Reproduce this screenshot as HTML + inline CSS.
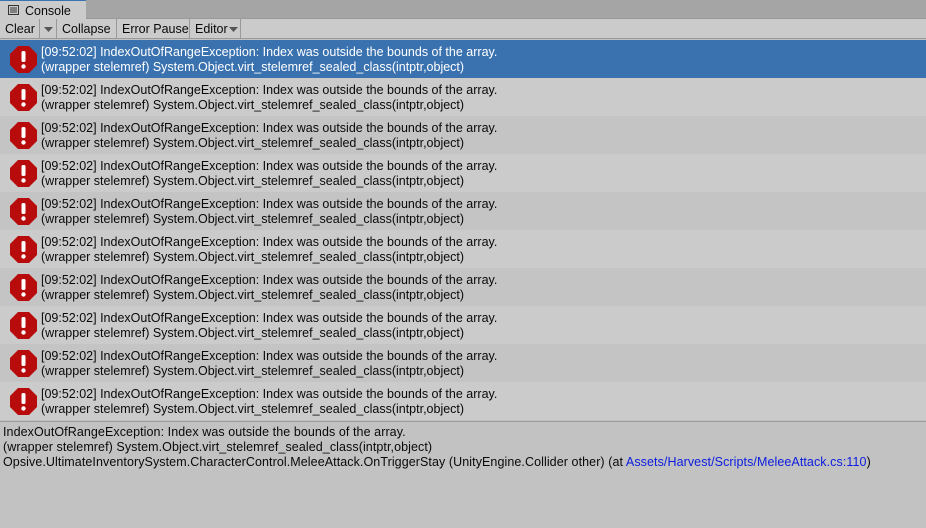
<!DOCTYPE html>
<html><head><style>
body{margin:0;width:926px;height:528px;background:#c2c2c2;font-family:"Liberation Sans",sans-serif;font-size:12.5px;color:#090909;overflow:hidden;position:relative}
.tabbar{position:absolute;left:0;top:0;width:926px;height:18px;background:#a5a5a5;border-bottom:1px solid #999}
.tab{position:absolute;left:0;top:0;width:86px;height:19px;background:#cbcbcb;border-top:1px solid #3a72b0;box-sizing:border-box}
.tab span{position:absolute;left:25px;top:3px;font-size:12.5px}
.tb{position:absolute;left:0;top:19px;width:926px;height:20px;background:#cbcbcb;border-bottom:1px solid #999;box-sizing:border-box}
.btn{position:absolute;top:0;height:19px;line-height:21px;border-right:1px solid #999;box-sizing:border-box;padding-left:5px}
.row{position:absolute;left:0;width:926px;height:38px}
.row .t{position:absolute;left:41px;top:5px;line-height:15px}
.row svg{position:absolute;left:10px;top:6px}
.sel{background:#3a72b0;color:#fff}
.a{background:#cbcbcb}.b{background:#c4c4c4}
.det{position:absolute;left:3px;top:425px;line-height:15px;letter-spacing:0.08px}
a{color:#0b1ce0;text-decoration:none}
</style></head><body>
<div class="tabbar"></div>
<div class="tab"><svg width="12" height="10" style="position:absolute;left:8px;top:4px"><rect x="0.5" y="0.5" width="10" height="9" fill="none" stroke="#333"/><path d="M2 3h7M2 5h7M2 7h7" stroke="#333"/></svg><span>Console</span></div>
<div class="tb">
<div class="btn" style="left:0;width:40px">Clear</div>
<div class="btn" style="left:40px;width:17px"><svg width="10" height="6" style="position:absolute;left:4px;top:8px"><path d="M0 0h9L4.5 5z" fill="#555"/></svg></div>
<div class="btn" style="left:57px;width:60px">Collapse</div>
<div class="btn" style="left:117px;width:73px">Error Pause</div>
<div class="btn" style="left:190px;width:51px">Editor<svg width="10" height="6" style="position:absolute;left:39px;top:8px"><path d="M0 0h9L4.5 5z" fill="#555"/></svg></div>
</div>
<div id="rows"></div>
<div style="position:absolute;left:0;top:421px;width:926px;height:1px;background:#999"></div>
<div class="det">IndexOutOfRangeException: Index was outside the bounds of the array.<br>(wrapper stelemref) System.Object.virt_stelemref_sealed_class(intptr,object)<br>Opsive.UltimateInventorySystem.CharacterControl.MeleeAttack.OnTriggerStay (UnityEngine.Collider other) (at <a>Assets/Harvest/Scripts/MeleeAttack.cs:110</a>)</div>
<script>
var h='';
for(var i=0;i<10;i++){var c=i==0?'sel':(i%2?'a':'b');
h+='<div class="row '+c+'" style="top:'+(40+i*38)+'px"><svg width="27" height="27" viewBox="0 0 27 27"><path d="M8 0h11l8 8v11l-8 8H8l-8-8V8z" fill="#b80b0b"/><rect x="11.5" y="5" width="4" height="11" rx="1.5" fill="#fff"/><circle cx="13.5" cy="20.5" r="2.2" fill="#fff"/></svg><div class="t">[09:52:02] IndexOutOfRangeException: Index was outside the bounds of the array.<br>(wrapper stelemref) System.Object.virt_stelemref_sealed_class(intptr,object)</div></div>';}
document.getElementById('rows').innerHTML=h;
</script>
</body></html>
